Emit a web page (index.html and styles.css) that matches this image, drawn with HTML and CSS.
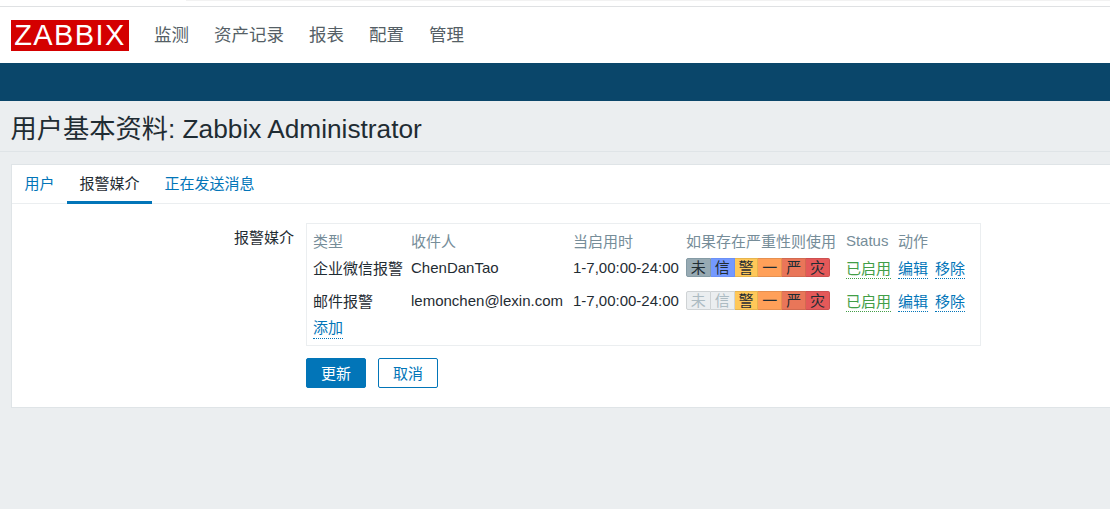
FILE: index.html
```html
<!DOCTYPE html>
<html lang="en">
<head>
    <meta charset="UTF-8">
    <title>用户基本资料</title>
    <link rel="stylesheet" href="styles.css">
</head>
<body>
    <div class="top-strip"><div class="top-sliver"></div></div>

    <header class="top-nav">
        <div class="logo">ZABBIX</div>
        <nav class="main-menu">
            <a href="#">监测</a>
            <a href="#">资产记录</a>
            <a href="#">报表</a>
            <a href="#">配置</a>
            <a href="#">管理</a>
        </nav>
    </header>
    <div class="sub-nav"></div>

    <h1 class="page-title">用户基本资料: Zabbix Administrator</h1>

    <main class="card">
        <ul class="tabs">
            <li><a href="#">用户</a></li>
            <li class="active"><a href="#">报警媒介</a></li>
            <li><a href="#">正在发送消息</a></li>
        </ul>

        <div class="form-row">
            <div class="form-label">报警媒介</div>
            <div class="form-field">
                <div class="media-box">
                    <table class="media-table">
                        <tr>
                            <th>类型</th>
                            <th>收件人</th>
                            <th>当启用时</th>
                            <th>如果存在严重性则使用</th>
                            <th>Status</th>
                            <th>动作</th>
                        </tr>
                        <tr>
                            <td>企业微信报警</td>
                            <td>ChenDanTao</td>
                            <td>1-7,00:00-24:00</td>
                            <td>
                                <div class="sev">
                                    <span class="s-na">未</span><span class="s-info">信</span><span class="s-warn">警</span><span class="s-avg">一</span><span class="s-high">严</span><span class="s-dis">灾</span>
                                </div>
                            </td>
                            <td><a class="link green" href="#">已启用</a></td>
                            <td class="actions"><a class="link" href="#">编辑</a><a class="link" href="#">移除</a></td>
                        </tr>
                        <tr>
                            <td>邮件报警</td>
                            <td>lemonchen@lexin.com</td>
                            <td>1-7,00:00-24:00</td>
                            <td>
                                <div class="sev">
                                    <span class="s-off">未</span><span class="s-off">信</span><span class="s-warn">警</span><span class="s-avg">一</span><span class="s-high">严</span><span class="s-dis">灾</span>
                                </div>
                            </td>
                            <td><a class="link green" href="#">已启用</a></td>
                            <td class="actions"><a class="link" href="#">编辑</a><a class="link" href="#">移除</a></td>
                        </tr>
                    </table>
                    <a class="link add-link" href="#">添加</a>
                </div>
                <div class="buttons">
                    <button class="btn-primary">更新</button>
                    <button class="btn-alt">取消</button>
                </div>
            </div>
        </div>
    </main>
</body>
</html>
```

FILE: styles.css
```css
body {
    margin: 0;
    background-color: #ebeef0;
    color: #1f2c33;
    font-family: "Liberation Sans", "Noto Sans CJK SC", sans-serif;
    font-size: 15px;
    overflow: hidden;
}

a {
    text-decoration: none;
}

.top-strip {
    height: 6px;
    background-color: #fff;
    border-bottom: 1px solid #dfe1e3;
}

.top-sliver {
    height: 1px;
    margin-left: 186px;
    background-color: #f2f2f2;
}

.top-nav {
    height: 56px;
    background-color: #fff;
    display: flex;
    align-items: center;
    padding-left: 11px;
}

.logo {
    width: 118px;
    height: 31px;
    background-color: #d40000;
    color: #fff;
    font-size: 29px;
    line-height: 31px;
    letter-spacing: 1.4px;
    text-align: center;
}

.main-menu {
    display: flex;
    gap: 25px;
    margin: -4px 0 0 25px;
}

.main-menu a {
    color: #555f66;
    font-size: 17.5px;
}

.sub-nav {
    height: 38px;
    background-color: #0a466a;
}

.page-title {
    margin: 0 0 12px;
    height: 50px;
    padding-left: 10.5px;
    border-bottom: 1px solid #dfe4e7;
    color: #1f2c33;
    font-size: 26.25px;
    font-weight: normal;
    line-height: 56px;
}

.card {
    margin-left: 11px;
    height: 242px;
    background-color: #fff;
    border: 1px solid #dfe4e7;
    border-right: none;
}

.tabs {
    display: flex;
    margin: 0;
    padding: 0;
    height: 38px;
    list-style: none;
    border-bottom: 1px solid #ebeef0;
}

.tabs li {
    padding: 0 12.5px;
    line-height: 38px;
}

.tabs a {
    color: #0275b8;
}

.tabs li.active {
    height: 39px;
    box-sizing: border-box;
    border-bottom: 3px solid #0275b8;
}

.tabs li.active a {
    color: #1f2c33;
}

.form-row {
    display: flex;
    padding-top: 19px;
}

.form-label {
    width: 282px;
    text-align: right;
    line-height: 29px;
}

.form-field {
    margin-left: 12px;
}

.media-box {
    width: 661px;
    height: 109px;
    padding: 6px;
    border: 1px solid #ebeef0;
}

.media-table {
    border-collapse: collapse;
}

.media-table th {
    padding: 0 8px 0 0;
    height: 20px;
    color: #768d99;
    font-weight: normal;
    text-align: left;
    white-space: nowrap;
}

.media-table td {
    padding: 0 8px 0 0;
    height: 33px;
    white-space: nowrap;
}

.media-table tr > :nth-child(2) {
    padding-right: 10px;
}

.media-table tr > :nth-child(3) {
    padding-right: 7px;
}

.media-table tr > :nth-child(4) {
    padding-right: 10px;
}

.media-table tr > :nth-child(5) {
    padding-right: 7px;
}

.media-table .link {
    vertical-align: 1px;
}

.sev {
    display: flex;
    width: 144px;
    height: 19px;
}

.sev span {
    flex: 1;
    box-sizing: border-box;
    height: 19px;
    border-width: 1px 1px 1px 0;
    border-style: solid;
    line-height: 17px;
    text-align: center;
}

.sev span:first-child {
    border-left-width: 1px;
    border-radius: 2px 0 0 2px;
}

.sev span:last-child {
    border-radius: 0 2px 2px 0;
}

.sev .s-na {
    background-color: #97aab3;
    border-color: #859ba5;
}

.sev .s-info {
    background-color: #7499ff;
    border-color: #6b90f5;
}

.sev .s-warn {
    background-color: #ffc859;
    border-color: #e6b44f;
}

.sev .s-avg {
    background-color: #ffa059;
    border-color: #e69050;
}

.sev .s-high {
    background-color: #e97659;
    border-color: #d26a50;
}

.sev .s-dis {
    background-color: #e45959;
    border-color: #cd5050;
}

.sev .s-off {
    background-color: #ebeef0;
    border-color: #cfd3d5;
    color: #acbbc2;
}

.link {
    color: #0275b8;
    border-bottom: 1px dotted #0275b8;
    padding-bottom: 1px;
}

.link.green {
    color: #429e47;
    border-bottom-color: #429e47;
}

.actions .link + .link {
    margin-left: 7px;
}

.add-link {
    display: inline-block;
    margin-top: 2px;
    line-height: 18px;
}

.buttons {
    display: flex;
    gap: 12px;
    margin-top: 12px;
}

.buttons button {
    width: 60px;
    height: 30px;
    padding: 0 0 2px;
    border: 1px solid #0275b8;
    border-radius: 2px;
    font-family: inherit;
    font-size: 15px;
}

.btn-primary {
    background-color: #0275b8;
    color: #fff;
}

.btn-alt {
    background-color: #fff;
    color: #0275b8;
}
```
